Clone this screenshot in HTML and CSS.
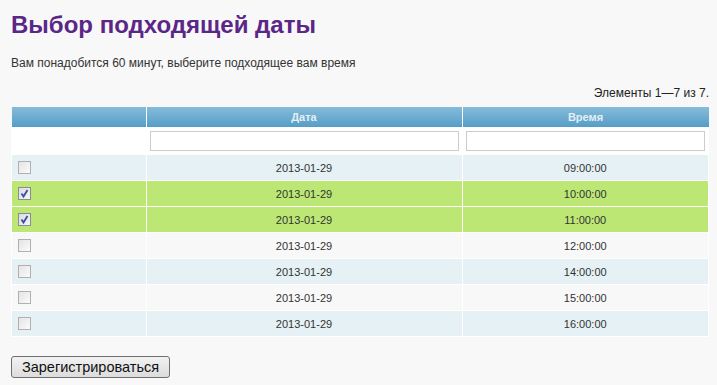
FILE: index.html
```html
<!DOCTYPE html>
<html lang="ru">
<head>
<meta charset="utf-8">
<title>Выбор подходящей даты</title>
<link rel="stylesheet" href="styles.css">
</head>
<body>
<div class="page">
  <h1 class="title">Выбор подходящей даты</h1>
  <p class="lead">Вам понадобится 60 минут, выберите подходящее вам время</p>
  <div class="summary">Элементы 1—7 из 7.</div>
  <table class="items">
    <thead>
      <tr class="head">
        <th class="c1"></th>
        <th class="c2">Дата</th>
        <th class="c3">Время</th>
      </tr>
      <tr class="filters">
        <td></td>
        <td><input class="filter" type="text"></td>
        <td><input class="filter" type="text"></td>
      </tr>
    </thead>
    <tbody>
      <tr class="odd"><td><span class="cb"></span></td><td>2013-01-29</td><td>09:00:00</td></tr>
      <tr class="selected"><td><span class="cb checked"><svg viewBox="0 0 13 13" width="13" height="13"><path d="M3.5 6.5 L5.5 9.5 L9.5 3" fill="none" stroke="#3550a8" stroke-width="1.8"/></svg></span></td><td>2013-01-29</td><td>10:00:00</td></tr>
      <tr class="selected"><td><span class="cb checked"><svg viewBox="0 0 13 13" width="13" height="13"><path d="M3.5 6.5 L5.5 9.5 L9.5 3" fill="none" stroke="#3550a8" stroke-width="1.8"/></svg></span></td><td>2013-01-29</td><td>11:00:00</td></tr>
      <tr class="even"><td><span class="cb"></span></td><td>2013-01-29</td><td>12:00:00</td></tr>
      <tr class="odd"><td><span class="cb"></span></td><td>2013-01-29</td><td>14:00:00</td></tr>
      <tr class="even"><td><span class="cb"></span></td><td>2013-01-29</td><td>15:00:00</td></tr>
      <tr class="odd"><td><span class="cb"></span></td><td>2013-01-29</td><td>16:00:00</td></tr>
    </tbody>
  </table>
  <button class="submit" type="button">Зарегистрироваться</button>
</div>
</body>
</html>
```
FILE: styles.css
```css
html, body {
  margin: 0;
  padding: 0;
  background: #f8f8f8;
}
body {
  font-family: "Liberation Sans", Arial, sans-serif;
  color: #333;
}
.page {
  padding: 0 8px 0 11px;
}
.title {
  margin: 0;
  padding-top: 9px;
  height: 33px;
  font-size: 24px;
  line-height: 32px;
  font-weight: bold;
  color: #5a2787;
}
.lead {
  margin: 0;
  padding-top: 14px;
  font-size: 12px;
  line-height: 14px;
  color: #333;
}
.summary {
  margin-top: 16px;
  height: 14px;
  line-height: 14px;
  font-size: 12px;
  text-align: right;
  color: #222;
}
.items {
  margin-top: 7px;
  width: 698px;
  border-collapse: collapse;
  table-layout: fixed;
  font-size: 11px;
}
.items th, .items td {
  border: 1px solid #fff;
  padding: 0;
  text-align: center;
}
.items tr.head th {
  height: 20px;
  border-top: 0;
  border-bottom: 1px solid #fff;
  background: linear-gradient(#86bbd9, #559dc7);
  color: #e4eef4;
  font-weight: bold;
  font-size: 11px;
}
.items tr.head th.c1 { width: 134px; border-left: 0; }
.items tr.head th.c2 { width: 315px; }
.items tr.head th.c3 { border-right: 0; }
.items tr.filters td {
  background: #fff;
  height: 26px;
  padding: 0 3px;
}
.filter {
  display: block;
  box-sizing: border-box;
  width: 100%;
  height: 20px;
  margin: 0;
  border: 1px solid #ccc;
  background: #fff;
}
.items tbody td {
  height: 25px;
  padding: 0;
  color: #333;
}
.items tbody tr {
  height: 26px;
}
.items tbody td:first-child {
  text-align: left;
  padding-left: 6px;
}
.items tr.odd { background: #e5f1f4; }
.items tr.even { background: #f8f8f8; }
.items tr.selected { background: #bce774; }
.cb {
  display: block;
  box-sizing: border-box;
  width: 13px;
  height: 13px;
  border: 1px solid #b0b0b0;
  background: linear-gradient(135deg, #e4e4e4, #fbfbfb);
}
.cb.checked {
  border-color: #8a8a9a;
  background: linear-gradient(135deg, #dcdcdc, #f5f5f5);
}
.cb svg {
  display: block;
  margin: -1px;
}
.submit {
  margin-top: 19px;
  width: 159px;
  height: 22px;
  padding: 0;
  font-family: "Liberation Sans", Arial, sans-serif;
  font-size: 14.5px;
  color: #111;
  background: linear-gradient(#f2f2f2, #dcdcdc);
  border: 1px solid #707070;
  border-radius: 3px;
}
```
